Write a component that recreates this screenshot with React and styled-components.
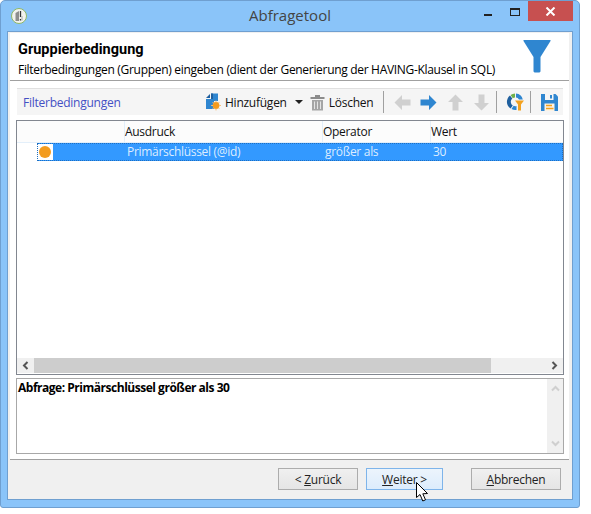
import * as React from 'react'
import styled, { createGlobalStyle } from 'styled-components'

const FONT = '"Open Sans", "Noto Sans", "Liberation Sans", sans-serif'

const AddIcon = () => (
  <svg width="16" height="18" viewBox="0 0 16 18">
    <path d="M1 5 L5 1 V5 Z" fill="#1f5f9e" />
    <path d="M6 0.5 H13 V8 H9 V16 H1 V6 H6 Z" fill="#2f86d0" />
    <path d="M6 0.5 H8 V6 H6 Z" fill="#1f5f9e" />
    <circle cx="11" cy="12.5" r="3.4" fill="#f39a1e" />
    <path d="M11 7.6 V17.4 M6.1 12.5 H15.9 M7.6 9.1 L14.4 15.9 M14.4 9.1 L7.6 15.9" stroke="#f7bd70" strokeWidth="1" />
    <circle cx="11" cy="12.5" r="3" fill="#f39a1e" />
  </svg>
)

const TrashIcon = () => (
  <svg width="15" height="17" viewBox="0 0 15 17">
    <path d="M5 1 H10 V3 H5 Z M0.5 3 H14.5 V5 H0.5 Z" fill="#8c8c8c" />
    <path d="M2 6 H13 V16.5 H2 Z" fill="#a5a5a5" />
    <path d="M4.5 7.5 V15 M7.5 7.5 V15 M10.5 7.5 V15" stroke="#e4e4e4" strokeWidth="1" />
  </svg>
)

const ArrowIcon = ({ rotate, color }) => (
  <svg width="17" height="17" viewBox="0 0 17 17" style={{ transform: `rotate(${rotate}deg)` }}>
    <path d="M0.5 5.5 H9 V1 L16.5 8.5 L9 16 V11.5 H0.5 Z" fill={color} />
  </svg>
)

const RefreshIcon = () => (
  <svg width="18" height="18" viewBox="0 0 18 18">
    <path d="M4 2.5 A8 8 0 0 0 4.5 15.5 L6.8 12.4 A4.2 4.2 0 0 1 6.3 5.6 Z" fill="#1f5f9e" />
    <path d="M4.6 2 A8 8 0 0 1 9 0.5 V4.4 A4.2 4.2 0 0 0 6.8 5.2 Z" fill="#6fb04a" />
    <path d="M10 0.6 A8 8 0 0 1 16.8 6.5 H13 A4.2 4.2 0 0 0 10 4.6 Z" fill="#2f86d0" />
    <path d="M5.5 16 A8 8 0 0 0 10.5 16.9 V13 A4 4 0 0 1 7.6 12.8 Z" fill="#2f86d0" />
    <path d="M9 7.5 H18 L15 11.5 V17.5 H12 V11.5 Z" fill="#f3a11e" />
  </svg>
)

const SaveIcon = () => (
  <svg width="17" height="17" viewBox="0 0 17 17">
    <path d="M0 0 H14.5 L17 2.5 V17 H0 Z" fill="#2f86d0" />
    <path d="M4 0 H12.5 V6 H4 Z" fill="#f5f5f5" />
    <path d="M9 1 H11 V4.5 H9 Z" fill="#2f86d0" />
    <path d="M3.5 9.5 H13.5 V17 H3.5 Z" fill="#fdf3e4" />
    <path d="M5 11.5 H11 M5 14.5 H12.5" stroke="#f3a11e" strokeWidth="1.6" />
  </svg>
)

const FunnelIcon = () => (
  <svg width="28" height="33" viewBox="0 0 28 33">
    <path d="M0.5 0 H27.5 V1 L17.5 17 V31.5 L16.5 32.5 H11.5 L10.5 31.5 V17 L0.5 1 Z" fill="#2f86d0" />
  </svg>
)

const AppIcon = () => (
  <svg width="16" height="16" viewBox="0 0 16 16">
    <circle cx="8" cy="8" r="7.5" fill="#f2f2ee" stroke="#8fb866" />
    <path d="M4.5 5 L8 3 V13 H4.5 Z" fill="#8d8d8d" />
    <path d="M9.5 3 V9 M9.5 11 V12.5" stroke="#333" strokeWidth="1.3" />
    <path d="M11 8 V12.5" stroke="#aaa" strokeWidth="1" />
  </svg>
)

const PointerCursor = () => (
  <svg width="13" height="20" viewBox="0 0 13 20">
    <path d="M0.5 0.5 V15.5 L4 12.5 L6.8 19 L9.5 17.8 L6.8 11.8 L11.5 11.5 Z" fill="#fff" stroke="#000" strokeWidth="1" strokeLinejoin="round" />
  </svg>
)

const Columns = ['', 'Ausdruck', 'Operator', 'Wert']

const App = () => {
  return (
    <>
      <GlobalStyle />
      <Window>
        <TitleBar>
          <AppIconSlot><AppIcon /></AppIconSlot>
          <Title>Abfragetool</Title>
          <Controls>
            <Minimize />
            <Maximize />
            <CloseButton>
              <svg width="11" height="9" viewBox="0 0 11 9">
                <path d="M1.5 0.5 L9.5 8.5 M9.5 0.5 L1.5 8.5" stroke="#fff" strokeWidth="2" />
              </svg>
            </CloseButton>
          </Controls>
        </TitleBar>
        <Client>
          <Panel>
            <Header>
              <HeaderText>
                <Heading>Gruppierbedingung</Heading>
                <Subheading>Filterbedingungen (Gruppen) eingeben (dient der Generierung der HAVING-Klausel in SQL)</Subheading>
              </HeaderText>
              <FunnelSlot><FunnelIcon /></FunnelSlot>
            </Header>
            <Content>
              <Toolbar>
                <ToolbarTitle>Filterbedingungen</ToolbarTitle>
                <ToolButton $left={66} $gap={4}><AddIcon /><span>Hinzufügen</span></ToolButton>
                <Caret />
                <ToolButton $left={7} $gap={4}><TrashIcon /><span>Löschen</span></ToolButton>
                <Separator $left={10} />
                <ToolButton $left={10}><ArrowIcon rotate={180} color="#d0d0d0" /></ToolButton>
                <ToolButton $left={9}><ArrowIcon rotate={0} color="#2f86d0" /></ToolButton>
                <ToolButton $left={10}><ArrowIcon rotate={-90} color="#d0d0d0" /></ToolButton>
                <ToolButton $left={9}><ArrowIcon rotate={90} color="#d0d0d0" /></ToolButton>
                <Separator $left={6} />
                <ToolButton $left={9}><RefreshIcon /></ToolButton>
                <Separator $left={6} />
                <ToolButton $left={10}><SaveIcon /></ToolButton>
              </Toolbar>
              <Table>
                <TableHead>
                  {Columns.map((name, i) => <HeadCell key={i}>{name}</HeadCell>)}
                </TableHead>
                <SelectedRow>
                  <MarkerCell><Marker /></MarkerCell>
                  <RowCell $width={72} />
                  <RowCell $width={198}>Primärschlüssel (@id)</RowCell>
                  <RowCell $width={108}>größer als</RowCell>
                  <RowCell>30</RowCell>
                </SelectedRow>
                <TableBody />
                <HScroll>
                  <ScrollButton>
                    <svg width="7" height="9" viewBox="0 0 7 9"><path d="M5.5 1 L2 4.5 L5.5 8" fill="none" stroke="#555" strokeWidth="2" /></svg>
                  </ScrollButton>
                  <ScrollThumb />
                  <ScrollTrack />
                  <ScrollButton>
                    <svg width="7" height="9" viewBox="0 0 7 9"><path d="M1.5 1 L5 4.5 L1.5 8" fill="none" stroke="#555" strokeWidth="2" /></svg>
                  </ScrollButton>
                </HScroll>
              </Table>
              <QueryBox>
                <QueryText>Abfrage: Primärschlüssel größer als 30</QueryText>
                <VScroll>
                  <svg width="9" height="7" viewBox="0 0 9 7"><path d="M1 5.5 L4.5 2 L8 5.5" fill="none" stroke="#cfcfcf" strokeWidth="2" /></svg>
                  <svg width="9" height="7" viewBox="0 0 9 7"><path d="M1 1.5 L4.5 5 L8 1.5" fill="none" stroke="#cfcfcf" strokeWidth="2" /></svg>
                </VScroll>
              </QueryBox>
            </Content>
          </Panel>
          <Footer>
            <Button $width={80}>&lt; <u>Z</u>urück</Button>
            <Button $width={77} $left={8} $hover>
              <u>W</u>eiter &gt;
              <CursorSlot><PointerCursor /></CursorSlot>
            </Button>
            <Button $width={90} $left={28}><u>A</u>bbrechen</Button>
          </Footer>
        </Client>
      </Window>
    </>
  )
}

const GlobalStyle = createGlobalStyle`
  html, body {
    margin: 0;
    padding: 0;
    background: #fff;
    font-family: ${FONT};
  }
`

const Window = styled.div`
  box-sizing: border-box;
  width: 580px;
  height: 508px;
  display: flex;
  flex-direction: column;
  padding: 0 6px 7px 6px;
  background: #8ac4f9;
  border: 1px solid #6f9fd0;
  border-radius: 5px 5px 3px 3px;
`

const TitleBar = styled.div`
  height: 30px;
  flex: none;
  display: flex;
  align-items: flex-start;
  position: relative;
`

const AppIconSlot = styled.div`
  display: flex;
  margin: 7px 0 0 4px;
`

const Title = styled.div`
  position: absolute;
  left: 0;
  right: 0;
  top: 4px;
  text-align: center;
  font-size: 15px;
  line-height: 20px;
  color: #444;
`

const Controls = styled.div`
  margin-left: auto;
  display: flex;
  align-items: flex-start;
  position: relative;
`

const Minimize = styled.div`
  width: 8px;
  height: 2px;
  margin: 13px 18px 0 0;
  background: #222;
`

const Maximize = styled.div`
  box-sizing: border-box;
  width: 10px;
  height: 8px;
  margin: 7px 8px 0 0;
  border: 1px solid #222;
  border-top-width: 2px;
`

const CloseButton = styled.div`
  width: 45px;
  height: 20px;
  background: #c75050;
  display: flex;
  align-items: center;
  justify-content: center;
`

const Client = styled.div`
  flex: 1;
  min-height: 0;
  display: flex;
  flex-direction: column;
  box-sizing: border-box;
  background: #f0f0f0;
  border: 1px solid #6f9fd0;
`

const Panel = styled.div`
  flex: 1;
  min-height: 0;
  margin: 1px 3px 0 2px;
  display: flex;
  flex-direction: column;
  background: #fff;
  border-bottom: 1px solid #a0a0a0;
`

const Header = styled.div`
  height: 47px;
  flex: none;
  display: flex;
  border-bottom: 1px solid #a0a0a0;
`

const HeaderText = styled.div`
  padding: 7px 0 0 8px;
  flex: 1;
`

const Heading = styled.div`
  font-family: Roboto, sans-serif;
  font-size: 14.5px;
  font-weight: 700;
  line-height: 19px;
  color: #000;
`

const Subheading = styled.div`
  margin-top: 2px;
  font-size: 12px;
  line-height: 17px;
  color: #000;
  white-space: nowrap;
  letter-spacing: -0.31px;
`

const FunnelSlot = styled.div`
  margin: 7px 18px 0 0;
  display: flex;
`

const Content = styled.div`
  flex: 1;
  min-height: 0;
  display: flex;
  flex-direction: column;
  padding: 7px 5px 7px 6px;
`

const Toolbar = styled.div`
  height: 26px;
  flex: none;
  margin: 0 1px 5px 1px;
  display: flex;
  align-items: center;
  padding-left: 6px;
  background: #f5f5f5;
  border-top: 1px solid #e0e0e0;
`

const ToolbarTitle = styled.div`
  font-size: 12px;
  color: #4450c4;
  width: 116px;
  white-space: nowrap;
  letter-spacing: -0.25px;
`

const ToolButton = styled.div`
  display: flex;
  align-items: center;
  gap: ${({ $gap }) => $gap ?? 6}px;
  margin-left: ${({ $left }) => $left}px;
  font-size: 12px;
  color: #111;
  white-space: nowrap;
  letter-spacing: -0.25px;
`

const Caret = styled.div`
  width: 0;
  height: 0;
  margin-left: 8px;
  border-left: 4px solid transparent;
  border-right: 4px solid transparent;
  border-top: 4px solid #222;
`

const Separator = styled.div`
  width: 1px;
  height: 22px;
  margin-left: ${({ $left }) => $left}px;
  background: #a0a0a0;
`

const Table = styled.div`
  height: 255px;
  flex: none;
  display: flex;
  flex-direction: column;
  box-sizing: border-box;
  border: 1px solid #828790;
`

const TableHead = styled.div`
  height: 21px;
  flex: none;
  display: grid;
  grid-template-columns: 107px 198px 108px 1fr;
  background: #fcfcfc;
  border-bottom: 1px solid #e3effa;
`

const HeadCell = styled.div`
  font-size: 12px;
  line-height: 21px;
  color: #111;
  border-left: 1px solid #e3effa;
  letter-spacing: -0.3px;

  &:first-child {
    border-left: 0;
  }
`

const SelectedRow = styled.div`
  height: 18px;
  flex: none;
  display: flex;
  margin-left: 20px;
  outline: 1px dotted #1f6fc0;
  outline-offset: -1px;
  background: #3399ff;
`

const MarkerCell = styled.div`
  width: 16px;
  flex: none;
  display: flex;
  align-items: center;
  justify-content: center;
  background: #fff;
  margin: 1px 0;
`

const Marker = styled.div`
  width: 12px;
  height: 12px;
  border-radius: 50%;
  background: #f39c1f;
`

const RowCell = styled.div`
  width: ${({ $width }) => ($width ? `${$width}px` : 'auto')};
  flex: none;
  box-sizing: border-box;
  padding-left: 2px;
  font-size: 12px;
  line-height: 18px;
  color: #dcecff;
  letter-spacing: -0.3px;
`

const TableBody = styled.div`
  flex: 1;
  background: #fff;
`

const HScroll = styled.div`
  height: 15px;
  flex: none;
  margin-bottom: 1px;
  display: flex;
  background: #f0f0f0;
`

const ScrollButton = styled.div`
  width: 17px;
  flex: none;
  display: flex;
  align-items: center;
  justify-content: center;
`

const ScrollThumb = styled.div`
  width: 457px;
  flex: none;
  background: #cdcdcd;
`

const ScrollTrack = styled.div`
  flex: 1;
`

const QueryBox = styled.div`
  margin-top: 3px;
  height: 76px;
  flex: none;
  display: flex;
  box-sizing: border-box;
  border: 1px solid #a8a8a8;
`

const QueryText = styled.div`
  flex: 1;
  padding-left: 1px;
  font-size: 12px;
  font-weight: 700;
  line-height: 18px;
  color: #000;
  letter-spacing: -0.48px;
`

const VScroll = styled.div`
  width: 16px;
  flex: none;
  display: flex;
  flex-direction: column;
  align-items: center;
  justify-content: space-between;
  padding: 6px 0;
  box-sizing: border-box;
  background: #f0f0f0;
`

const Footer = styled.div`
  height: 39px;
  flex: none;
  display: flex;
  align-items: flex-start;
  justify-content: flex-end;
  padding: 8px 11px 0 0;
  box-sizing: border-box;
`

const Button = styled.div`
  position: relative;
  width: ${({ $width }) => $width}px;
  height: 22px;
  margin-left: ${({ $left }) => $left ?? 0}px;
  box-sizing: border-box;
  display: flex;
  align-items: center;
  justify-content: center;
  white-space: pre;
  font-size: 12px;
  letter-spacing: -0.25px;
  color: #222;
  border: 1px solid ${({ $hover }) => ($hover ? '#7eb4ea' : '#acacac')};
  background: ${({ $hover }) => ($hover
    ? 'linear-gradient(#ecf4fc, #dcecfc)'
    : 'linear-gradient(#f0f0f0, #e5e5e5)')};
`

const CursorSlot = styled.div`
  position: absolute;
  left: 49px;
  top: 13px;
  display: flex;
`

export default App
